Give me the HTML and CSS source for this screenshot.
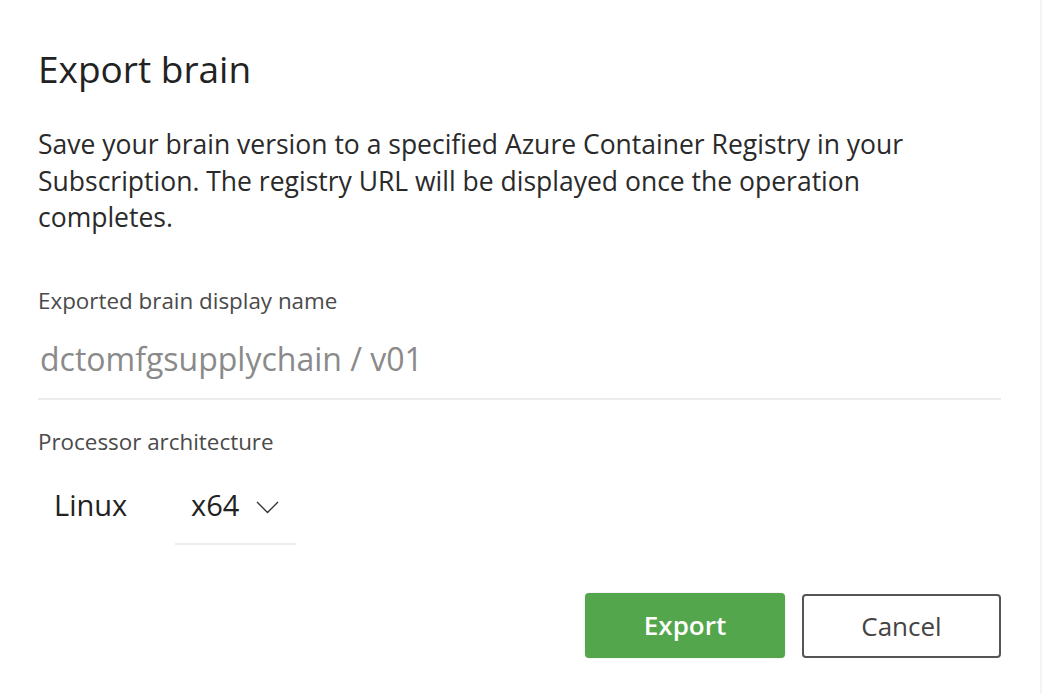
FILE: index.html
```html
<!DOCTYPE html>
<html lang="en">
<head>
<meta charset="utf-8">
<title>Export brain</title>
<link rel="stylesheet" href="styles.css">
</head>
<body>
<div class="dialog">
  <h1 class="title">Export brain</h1>
  <p class="desc">Save your brain version to a specified Azure Container Registry in your Subscription. The registry URL will be displayed once the operation completes.</p>
  <div class="field field-name">
    <div class="label">Exported brain display name</div>
    <div class="input">dctomfgsupplychain / v01</div>
  </div>
  <div class="field field-arch">
    <div class="label">Processor architecture</div>
    <div class="arch">
      <span class="os">Linux</span>
      <div class="select">
        <span class="select-value">x64</span>
        <svg class="chevron" width="23" height="13" viewBox="0 0 23 13"><path d="M1 1 L11.5 11.5 L22 1" fill="none" stroke="#333" stroke-width="1.4"/></svg>
      </div>
    </div>
  </div>
  <div class="actions">
    <button class="btn btn-primary">Export</button>
    <button class="btn btn-secondary">Cancel</button>
  </div>
</div>
</body>
</html>
```

FILE: styles.css
```css
html, body {
  margin: 0;
  padding: 0;
  background: #ffffff;
}
body {
  font-family: "Open Sans", "Noto Sans", "Liberation Sans", sans-serif;
  color: #252525;
  border-right: 2px solid #f4f4f4;
  box-sizing: border-box;
  width: 1042px;
  height: 694px;
}
.dialog {
  padding: 45px 39px 0 38px;
}
.title {
  margin: 0;
  font-weight: 400;
  font-size: 37px;
  line-height: 48px;
  color: #222;
}
.desc {
  margin: 33px 0 0;
  font-size: 26.5px;
  line-height: 36.5px;
  color: #2a2a2a;
}
.label {
  font-size: 22.4px;
  line-height: 30px;
  color: #4a4a4a;
}
.field-name {
  margin-top: 50px;
}
.input {
  margin-top: 21px;
  padding-left: 2px;
  padding-bottom: 17px;
  font-size: 32px;
  line-height: 44px;
  color: #8a8a8a;
  border-bottom: 2px solid #ececec;
}
.field-arch {
  margin-top: 27px;
}
.arch {
  display: flex;
  align-items: flex-start;
  margin-top: 28px;
}
.os {
  margin-left: 16px;
  width: 121px;
  font-size: 29px;
  line-height: 40px;
  color: #222;
}
.select {
  display: flex;
  align-items: center;
  width: 121px;
  box-sizing: border-box;
  padding: 0 0 18px 16px;
  border-bottom: 2px solid #ececec;
}
.select-value {
  font-size: 29px;
  line-height: 40px;
  color: #222;
}
.chevron {
  margin-left: 17px;
  margin-top: 6px;
}
.actions {
  display: flex;
  justify-content: flex-end;
  align-items: flex-start;
  gap: 17px;
  margin-top: 48px;
}
.btn {
  font-family: inherit;
  font-size: 26px;
  border-radius: 4px;
  cursor: pointer;
  padding: 0;
}
.btn-primary {
  width: 200px;
  height: 65px;
  background: #53a64b;
  border: none;
  color: #ffffff;
  font-weight: 600;
  box-shadow: 0 0 2px rgba(0,0,0,0.15);
}
.btn-secondary {
  width: 199px;
  height: 64px;
  margin-top: 1px;
  background: #ffffff;
  border: 2px solid #555555;
  color: #444444;
}
```
